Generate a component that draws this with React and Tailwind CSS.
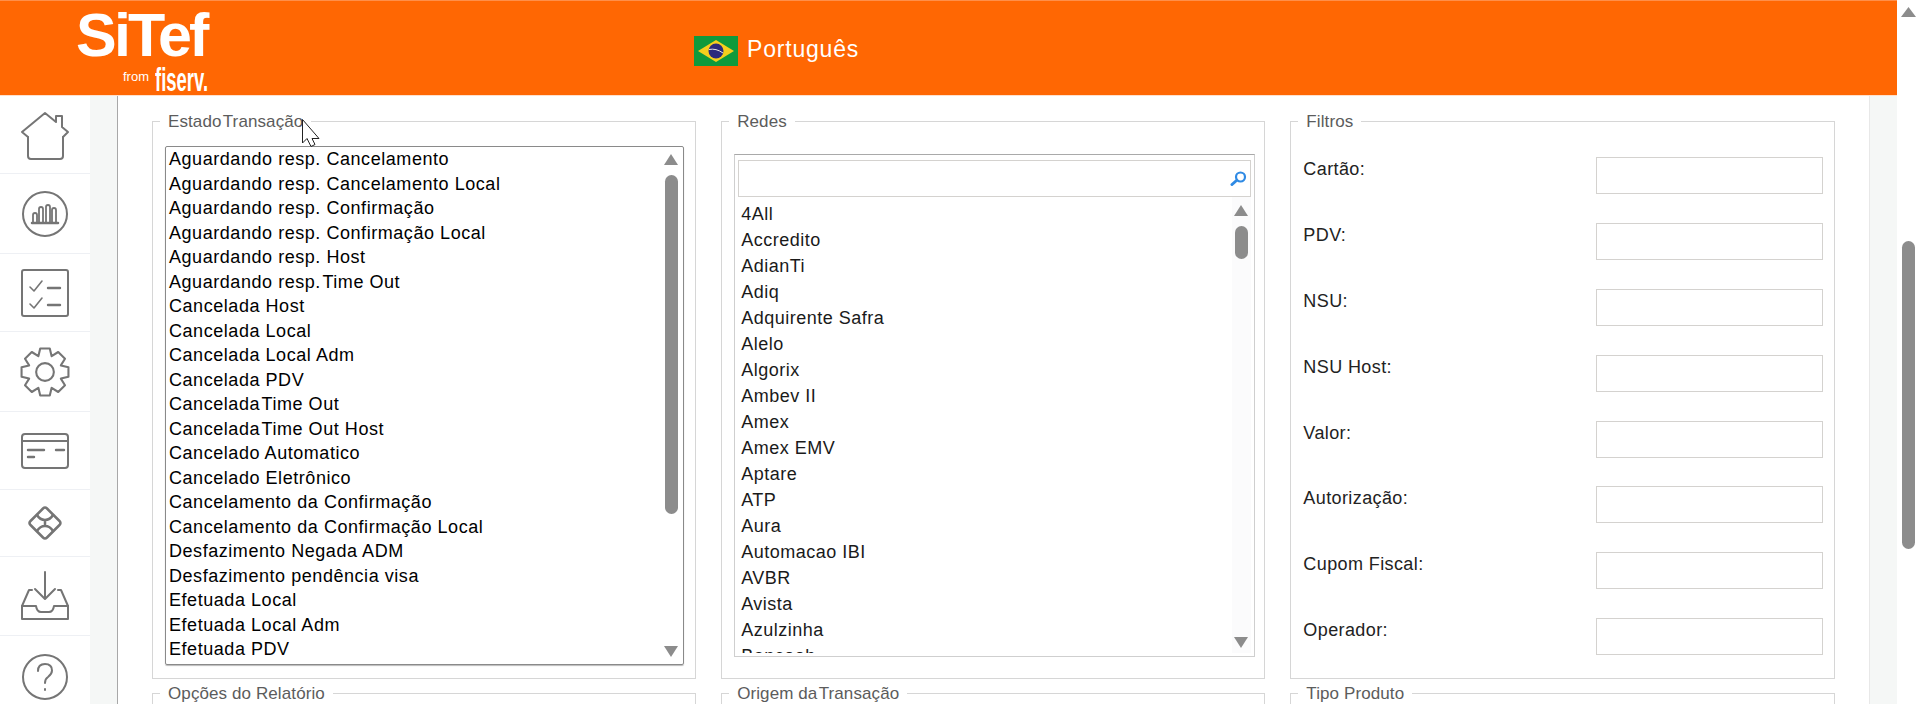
import React, { Fragment } from 'react';

const estados = [
  'Aguardando resp. Cancelamento',
  'Aguardando resp. Cancelamento Local',
  'Aguardando resp. Confirmação',
  'Aguardando resp. Confirmação Local',
  'Aguardando resp. Host',
  'Aguardando resp. Time Out',
  'Cancelada Host',
  'Cancelada Local',
  'Cancelada Local Adm',
  'Cancelada PDV',
  'Cancelada Time Out',
  'Cancelada Time Out Host',
  'Cancelado Automatico',
  'Cancelado Eletrônico',
  'Cancelamento da Confirmação',
  'Cancelamento da Confirmação Local',
  'Desfazimento Negada ADM',
  'Desfazimento pendência visa',
  'Efetuada Local',
  'Efetuada Local Adm',
  'Efetuada PDV',
];

const redes = [
  '4All', 'Accredito', 'AdianTi', 'Adiq', 'Adquirente Safra', 'Alelo', 'Algorix', 'Ambev II', 'Amex',
  'Amex EMV', 'Aptare', 'ATP', 'Aura', 'Automacao IBI', 'AVBR', 'Avista', 'Azulzinha', 'Bancoob',
];

const filtros = ['Cartão:', 'PDV:', 'NSU:', 'NSU Host:', 'Valor:', 'Autorização:', 'Cupom Fiscal:', 'Operador:'];

const stroke = { fill: 'none', stroke: '#757575', strokeWidth: 2, strokeLinecap: 'round', strokeLinejoin: 'round' };

// 8 dentes, calculado uma vez so
const gearPath = (() => {
  const pts = [];
  for (let i = 0; i < 8; i++) {
    const a = (i * Math.PI) / 4 - Math.PI / 2;
    [[-0.39, 16.5], [-0.2, 23], [0.2, 23], [0.39, 16.5]].forEach(([d, r]) => {
      pts.push(`${(24 + r * Math.cos(a + d)).toFixed(1)} ${(24 + r * Math.sin(a + d)).toFixed(1)}`);
    });
  }
  return 'M' + pts.join('L') + 'Z';
})();

const HomeIcon = () => (
  <svg width="50" height="50" viewBox="0 -1 50 50" {...stroke}>
    <path d="M8 26V45Q8 48 11 48H40Q43 48 43 45V26" />
    <path d="M8 26L2 21L25 2L36 11V5H42V16L48 21L43 26" />
  </svg>
);

const ChartIcon = () => (
  <svg width="48" height="48" viewBox="0 0 48 48" {...stroke}>
    <circle cx="24" cy="24" r="22" />
    <path strokeWidth="2.500" d="M11 33H37" />
    <path strokeWidth="1.800" d="M12 33V25Q12 23 14 23Q16 23 16 25V33M18 33V19Q18 17 20 17Q22 17 22 19V33M25 33V17Q25 15 27 15Q29 15 29 17V33M31 33V20Q31 18 33 18Q35 18 35 20V33" />
  </svg>
);

const ChecklistIcon = () => (
  <svg width="50" height="50" viewBox="0 0 50 50" {...stroke}>
    <rect x="2" y="2" width="46" height="46" rx="2" />
    <path d="M10 19L14 23L22 13M10 36L14 40L22 30" strokeWidth="1.600" />
    <path d="M28 20H40M28 37H40" strokeWidth="2.400" />
  </svg>
);

const GearIcon = () => (
  <svg width="50" height="50" viewBox="0 0 48 48" {...stroke}>
    <path d={gearPath} />
    <circle cx="24" cy="24" r="8.500" />
  </svg>
);

const CardIcon = () => (
  <svg width="50" height="38" viewBox="0 0 50 38" {...stroke}>
    <rect x="2" y="2" width="46" height="34" rx="3" />
    <path d="M2 9H48" />
    <path d="M8 18H24M36 18H44M8 25H14" strokeWidth="2.400" />
  </svg>
);

const DiamondIcon = () => (
  <svg width="36" height="36" viewBox="0 0 36 36" {...stroke} strokeWidth="2.500">
    <path d="M16 3.500Q18 1.500 20 3.500L32.500 16Q34.500 18 32.500 20L20 32.500Q18 34.500 16 32.500L3.500 20Q1.500 18 3.500 16Z" />
    <path d="M10 10Q13 15 18 15Q23 15 26 10M10 26Q13 21 18 21Q23 21 26 26M18 15V21" />
  </svg>
);

const InboxIcon = () => (
  <svg width="50" height="50" viewBox="0 0 50 50" {...stroke}>
    <path d="M25 1V27M15 18L25 28L35 18" />
    <path d="M12 19H9L2 35V48H48V35L41 19H38" />
    <path d="M2 35H16Q17 41 21 41H29Q33 41 34 35H48" />
  </svg>
);

const HelpIcon = () => (
  <svg width="48" height="48" viewBox="0 0 48 48" {...stroke}>
    <circle cx="24" cy="24" r="22" />
    <path d="M17 18Q17 11 24 11Q31 11 31 17.500Q31 21 27 24Q24 26 24 30" />
    <path d="M24 36V37" />
  </svg>
);

const BrazilFlag = () => (
  <svg width="44" height="30" viewBox="0 0 44 30">
    <rect width="44" height="30" fill="#0f9a3c" />
    <path d="M22 4L40 15L22 26L4 15Z" fill="#f5cf1d" />
    <circle cx="22" cy="15" r="7.500" fill="#2b2a7c" />
    <path d="M15 13.500Q22 12 29 17" fill="none" stroke="#e8e8e8" strokeWidth="1" />
  </svg>
);

const ScrollBar = ({ thumbClass, className }) => (
  <div className={`flex flex-col items-center ${className}`}>
    <svg width="14" height="11" viewBox="0 0 14 11" className="shrink-0"><path d="M7 0L14 11H0Z" fill="#8c8c8c" /></svg>
    <div className={`w-[13px] rounded-full bg-[#8c8c8c] ${thumbClass}`} />
    <svg width="14" height="11" viewBox="0 0 14 11" className="mt-auto shrink-0"><path d="M7 11L14 0H0Z" fill="#8c8c8c" /></svg>
  </div>
);

// a captura tem o espaco quase sumindo antes do T
const TightT = ({ text }) => text.split(/ (?=T)/).map((part, i) => (
  <Fragment key={i}>
    {i > 0 && <span className="tracking-[-3.500px]"> </span>}
    {part}
  </Fragment>
));

const Box = ({ title, className = '', children }) => (
  <fieldset className={`border border-[#d6d6d6] min-w-0 ${className}`}>
    <legend className="ml-[7px] px-2 pt-[2px] text-[17px] leading-5 tracking-[.1px] text-[#5c5c5c]"><TightT text={title} /></legend>
    {children}
  </fieldset>
);

const SearchGlass = () => (
  <svg width="17" height="15" viewBox="0 0 17 15" fill="none" stroke="#2f8ae4" className="shrink-0">
    <circle cx="10.500" cy="6" r="4.500" strokeWidth="2.200" />
    <path d="M6.500 9.500L2 13.500" strokeWidth="3" strokeLinecap="round" />
  </svg>
);

const sideItems = [
  { icon: <HomeIcon />, h: 'h-[78px]' },
  { icon: <ChartIcon />, h: 'h-[80px]' },
  { icon: <ChecklistIcon />, h: 'h-[78px]' },
  { icon: <GearIcon />, h: 'h-[80px]' },
  { icon: <CardIcon />, h: 'h-[78px]' },
  { icon: <DiamondIcon />, h: 'h-[67px]' },
  { icon: <InboxIcon />, h: 'h-[79px]' },
  { icon: <HelpIcon />, h: 'h-[82px]' },
];

export default function App() {
  return (
    <div className="relative flex h-screen w-full overflow-hidden bg-white font-['Liberation_Sans',Arial,sans-serif]">
      <div className="flex min-w-0 flex-1 flex-col">
        <header className="flex h-[96px] shrink-0 border-t border-t-[#ff8f4a] border-b border-b-[#ffe0cc] bg-[#ff6703] text-white">
          <div className="ml-[76px] mt-[6px] flex w-[618px] flex-col">
            <span className="h-[56px] text-[61px] font-bold leading-[56px] tracking-[-2.800px]">SiTef</span>
            <div className="flex items-start">
              <span className="ml-[47px] mt-[6px] text-[13px] leading-4">from</span>
              <span className="ml-[6px] mt-[1px] origin-left scale-x-[.56] text-[33px] font-bold leading-[31px]">fiserv.</span>
            </div>
          </div>
          <div className="mt-[35px] flex h-[30px] items-center gap-[9px]">
            <BrazilFlag />
            <span className="mb-[3px] text-[23px] tracking-[.8px]">Português</span>
          </div>
        </header>

        <div className="flex min-h-0 flex-1">
          <nav className="w-[90px] shrink-0">
            {sideItems.map((item, i) => (
              <div key={i} className={`flex items-center justify-center border-b border-[#eef0f4] ${item.h}`}>
                {item.icon}
              </div>
            ))}
          </nav>
          <div className="w-[28px] shrink-0 border-r border-[#a8a8a8] bg-[#f5f7f6]" />

          <main className="grid min-w-0 flex-1 grid-cols-3 content-start gap-x-[25px] gap-y-[3px] pl-[34px] pr-[34.500px] pt-[14px]">
            <Box title="Estado Transação" className="h-[569px]">
              <div className="ml-[12px] mr-[11px] mt-[14px] flex h-[519px] rounded-[2px] border border-[#8a8a8a] shadow-[0_1px_1px_#bbb]">
                <ul className="min-w-0 flex-1 overflow-hidden pl-[3px] text-[18px] leading-[24.500px] tracking-[.55px] text-black">
                  {estados.map((e) => <li key={e} className="whitespace-nowrap"><TightT text={e} /></li>)}
                </ul>
                <ScrollBar className="my-[7px] mr-[5px] w-[14px]" thumbClass="mt-[10px] h-[339px]" />
              </div>
            </Box>

            <Box title="Redes" className="h-[569px]">
              <div className="ml-[12px] mr-[9px] mt-[22px] flex h-[503px] flex-col border border-[#cfcfcf] border-t-[#a9a9a9] px-[3px] pb-[3px] pt-[5px]">
                <div className="flex h-[37px] shrink-0 items-center border border-[#d4d2cf] pr-[3px]">
                  <input className="h-full min-w-0 flex-1 outline-none" aria-label="Buscar" />
                  <SearchGlass />
                </div>
                <div className="flex min-h-0 flex-1">
                  <ul className="min-w-0 flex-1 overflow-hidden pl-[3px] pt-[4px] text-[18px] leading-[26px] tracking-[.5px] text-[#1a1a1a]">
                    {redes.map((r) => <li key={r} className="whitespace-nowrap">{r}</li>)}
                  </ul>
                  <ScrollBar className="w-[19px] bg-[#fbfbfc] pr-[1px] pt-[8px] pb-[5px]" thumbClass="mt-[10px] h-[33px]" />
                </div>
              </div>
            </Box>

            <Box title="Filtros" className="h-[569px]">
              <div className="mt-[25px] flex flex-col gap-[28.900px] pl-[12px] pr-[11px]">
                {filtros.map((f) => (
                  <div key={f} className="flex items-start justify-between">
                    <label className="text-[18px] leading-6 tracking-[.4px] text-[#222]">{f}</label>
                    <input className="h-[37px] w-[227px] border border-[#d4d2cf] outline-none" aria-label={f} />
                  </div>
                ))}
              </div>
            </Box>

            <Box title="Opções do Relatório" className="h-[40px]" />
            <Box title="Origem da Transação" className="h-[40px]" />
            <Box title="Tipo Produto" className="h-[40px]" />
          </main>

          <div className="w-[28px] shrink-0 border-l border-[#e8e8e8] bg-[#f5f7f6]" />
        </div>
      </div>

      <aside className="flex w-[23px] shrink-0 flex-col items-center pt-[7px]">
        <svg width="15" height="10" viewBox="0 0 15 10"><path d="M7.500 0L15 10H0Z" fill="#8c8c8c" /></svg>
        <div className="mt-[224px] h-[308px] w-[13px] rounded-full bg-[#8c8c8c]" />
      </aside>

      {/* cursor do mouse na captura */}
      <svg width="18" height="29" viewBox="0 0 18 29" className="absolute left-[302px] top-[119px]">
        <path d="M.5 .5V24L5 19.500L9 27.500L13 25.500L10 19.500H17Z" fill="#fff" stroke="#222" strokeWidth="1" strokeLinejoin="round" />
      </svg>
    </div>
  );
}
